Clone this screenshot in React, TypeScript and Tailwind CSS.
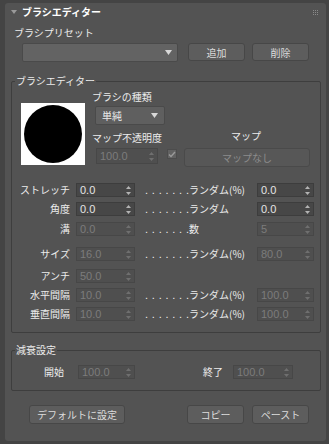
import React from 'react';

const jp = "font-[family-name:'Noto_Sans_CJK_JP',sans-serif]";
const num = "font-[family-name:'Liberation_Sans',sans-serif]";

function Arrows({ disabled }: { disabled?: boolean }) {
  const c = disabled ? '#6f6f6f' : '#b4b4b4';
  return (
    <svg width="5" height="9" viewBox="0 0 5 9" className="shrink-0 mr-[3px]">
      <path d="M2.5 0 L5 3 L0 3 Z" fill={c} />
      <path d="M0 6 L5 6 L2.5 9 Z" fill={c} />
    </svg>
  );
}

function Spinner({ value, className, disabled }: { value: string; className: string; disabled?: boolean }) {
  return (
    <div
      className={`flex items-center h-[14px] border ${
        disabled ? 'bg-[#4f4f4f] border-[#474747] text-[#7c7c7c]' : 'bg-[#474747] border-[#3d3d3d] text-[#e4e4e4]'
      } ${className}`}
    >
      <span className={`flex-1 pl-[3px] text-[11px] leading-none ${num}`}>{value}</span>
      <Arrows disabled={disabled} />
    </div>
  );
}

function Button({ children, className }: { children: React.ReactNode; className: string }) {
  return (
    <div
      className={`flex items-center justify-center h-[18px] rounded-[3px] bg-[#5d5d5d] border border-[#474747] text-[#dcdcdc] text-[10px] ${className}`}
    >
      {children}
    </div>
  );
}

function Caret() {
  return (
    <svg width="7" height="5" viewBox="0 0 7 5" className="shrink-0">
      <path d="M0 0 L7 0 L3.5 5 Z" fill="#d8d8d8" />
    </svg>
  );
}

type Row = {
  label: string;
  left: string;
  leftOn?: boolean;
  mid?: string;
  right?: string;
  rightOn?: boolean;
  mt: string;
};

const rows: Row[] = [
  { label: 'ストレッチ', left: '0.0', leftOn: true, mid: 'ランダム(%)', right: '0.0', rightOn: true, mt: 'mt-[16px]' },
  { label: '角度', left: '0.0', leftOn: true, mid: 'ランダム', right: '0.0', rightOn: true, mt: 'mt-[5px]' },
  { label: '溝', left: '0.0', mid: '数', right: '5', mt: 'mt-[6px]' },
  { label: 'サイズ', left: '16.0', mid: 'ランダム(%)', right: '80.0', mt: 'mt-[11px]' },
  { label: 'アンチ', left: '50.0', mt: 'mt-[8px]' },
  { label: '水平間隔', left: '10.0', mid: 'ランダム(%)', right: '100.0', mt: 'mt-[5px]' },
  { label: '垂直間隔', left: '10.0', mid: 'ランダム(%)', right: '100.0', mt: 'mt-[5px]' },
];

export default function App() {
  return (
    <div className={`w-[329px] h-[444px] bg-[#444444] pt-[3px] pl-[5px] text-[#ececec] ${jp}`}>
      <div className="w-[321px] h-[438px] bg-[#535353] rounded-[3px]">
        {/* Header */}
        <div className="flex items-center h-[18px] pl-[6px] pr-[8px]">
          <svg width="6" height="4" viewBox="0 0 6 4" className="shrink-0">
            <path d="M0 0 L6 0 L3 4 Z" fill="#9a9a9a" />
          </svg>
          <span className="ml-[5px] text-[10px] font-bold leading-none text-white">ブラシエディター</span>
          <div className="ml-auto grid grid-cols-3 gap-[1px]">
            {Array.from({ length: 9 }).map((_, i) => (
              <div key={i} className="w-[1px] h-[1px] bg-[#8a8a8a]" />
            ))}
          </div>
        </div>

        {/* Preset */}
        <div className="mt-[6px] ml-[9px] h-[12px] text-[10px] leading-[12px]">ブラシプリセット</div>
        <div className="flex mt-[4px]">
          <div className="ml-[17px] w-[156px] h-[19px] bg-[#636363] border border-[#4a4a4a] rounded-[2px] flex items-center justify-end pr-[5px]">
            <Caret />
          </div>
          <Button className="ml-[10px] w-[57px] self-start">追加</Button>
          <Button className="ml-[7px] w-[57px] self-start">削除</Button>
        </div>

        {/* Brush editor group */}
        <fieldset className="mt-[13px] ml-[6px] w-[310px] border border-[#3e3e3e] rounded-[2px] pb-[11px]">
          <legend className="ml-[3px] px-[1px] text-[10px] leading-[12px]">ブラシエディター</legend>
          <div className="flex pt-[4px]">
            <div className="ml-[9px] mt-[12px] w-[64px] h-[62px] bg-white flex items-center justify-center shrink-0">
              <div className="w-[58px] h-[58px] rounded-full bg-black" />
            </div>
            <div className="ml-[7px] flex flex-col">
              <div className="h-[12px] text-[10px] leading-[12px]">ブラシの種類</div>
              <div className="mt-[3px] ml-[3px] w-[70px] h-[19px] bg-[#5f5f5f] border border-[#4a4a4a] rounded-[2px] flex items-center px-[6px]">
                <span className="text-[10px] leading-none flex-1">単純</span>
                <Caret />
              </div>
              <div className="flex mt-[7px] h-[12px] text-[10px] leading-[12px]">
                <div className="w-[91px]">マップ不透明度</div>
                <div className="w-[126px] text-center -mt-[2px]">マップ</div>
              </div>
              <div className="flex items-start mt-[4px]">
                <Spinner value="100.0" disabled className="ml-[4px] w-[62px] h-[16px]" />
                <div className="ml-[9px] mt-[1px] w-[10px] h-[10px] bg-[#626262] border border-[#4c4c4c] flex items-center justify-center">
                  <svg width="8" height="7" viewBox="0 0 8 7">
                    <path d="M1 3.5 L3 5.5 L7 1" stroke="#9a9a9a" strokeWidth="1.4" fill="none" />
                  </svg>
                </div>
                <div className="ml-[7px] w-[126px] h-[19px] rounded-[3px] bg-[#575757] border border-[#4a4a4a] flex items-center justify-center text-[10px] text-[#8c8c8c]">
                  マップなし
                </div>
              </div>
            </div>
          </div>

          {rows.map((r) => (
            <div key={r.label} className={`flex items-center h-[14px] ${r.mt}`}>
              <div className="w-[58px] text-right text-[10px] leading-none">{r.label}</div>
              <Spinner value={r.left} disabled={!r.leftOn} className="ml-[6px] w-[59px]" />
              {r.mid && (
                <>
                  <div className="ml-[10px] w-[44px] flex justify-between text-[11px] leading-none">
                    {Array.from({ length: 7 }).map((_, i) => (
                      <span key={i} className={num}>.</span>
                    ))}
                  </div>
                  <div className="w-[64px] text-[10px] leading-none whitespace-nowrap">{r.mid}</div>
                </>
              )}
              {r.right && <Spinner value={r.right} disabled={!r.rightOn} className="ml-[4px] w-[57px]" />}
            </div>
          ))}
        </fieldset>

        {/* Falloff group */}
        <fieldset className="mt-[11px] ml-[6px] w-[310px] border border-[#3e3e3e] rounded-[2px] pb-[11px]">
          <legend className="ml-[3px] px-[1px] text-[10px] leading-[12px]">減衰設定</legend>
          <div className="flex items-center h-[14px] mt-[9px]">
            <div className="w-[52px] text-right text-[10px] leading-none">開始</div>
            <Spinner value="100.0" disabled className="ml-[14px] w-[57px]" />
            <div className="w-[88px] text-right text-[10px] leading-none">終了</div>
            <Spinner value="100.0" disabled className="ml-[10px] w-[60px]" />
          </div>
        </fieldset>

        {/* Bottom buttons */}
        <div className="flex mt-[14px]">
          <Button className="ml-[24px] w-[96px] h-[19px]">デフォルトに設定</Button>
          <Button className="ml-[62px] w-[57px] h-[19px]">コピー</Button>
          <Button className="ml-[8px] w-[57px] h-[19px]">ペースト</Button>
        </div>
      </div>
    </div>
  );
}
